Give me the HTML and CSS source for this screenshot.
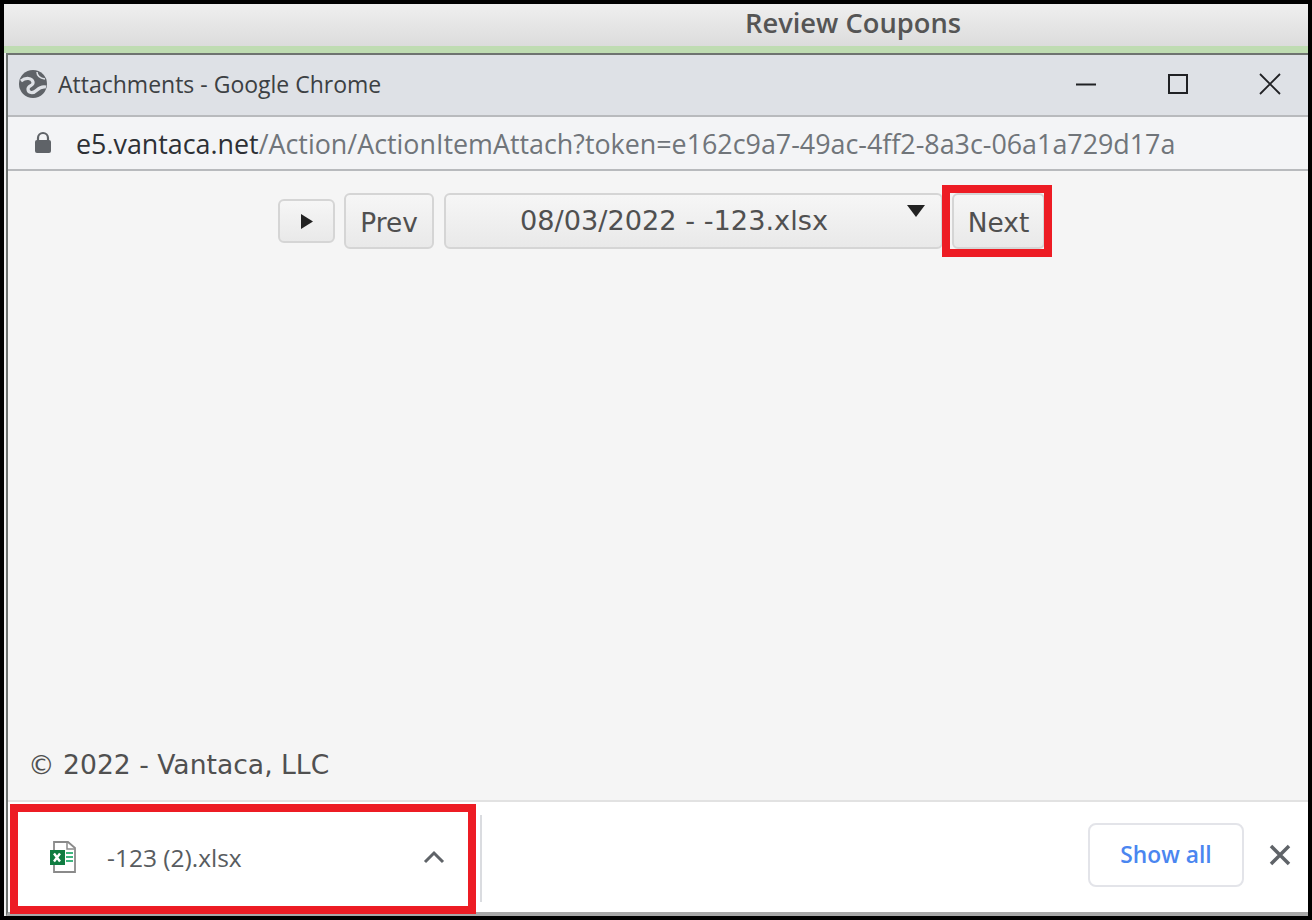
FILE: index.html
```html
<!DOCTYPE html>
<html lang="en">
<head>
    <meta charset="UTF-8">
    <title>Attachments - Google Chrome</title>
    <link rel="stylesheet" href="styles.css">
</head>
<body>
    <div class="screen">
        <div class="app-header">Review Coupons</div>
        <div class="popup">
            <div class="titlebar">
                <svg class="globe" width="30" height="30" viewBox="0 0 30 30">
                    <circle cx="15" cy="15" r="14" fill="#5f6368"/>
                    <path d="M3 12C8 8 14 9 15 13C16 17 10 16 10 20C10 24 15 25 19 21C21 19 23 17 28 18" fill="none" stroke="#dee1e6" stroke-width="3.200"/>
                    <path d="M19 3C19 7 21 9 27 10" fill="none" stroke="#dee1e6" stroke-width="1.500"/>
                </svg>
                <span class="title">Attachments - Google Chrome</span>
                <div class="winctl">
                    <svg width="24" height="24" viewBox="0 0 24 24"><path d="M2 12.500h20" stroke="#202124" stroke-width="2"/></svg>
                    <svg width="24" height="24" viewBox="0 0 24 24"><rect x="3" y="3" width="18" height="18" fill="none" stroke="#202124" stroke-width="2"/></svg>
                    <svg width="24" height="24" viewBox="0 0 24 24"><path d="M2 2l20 20M22 2L2 22" stroke="#202124" stroke-width="1.800"/></svg>
                </div>
            </div>
            <div class="urlbar">
                <svg class="lock" width="18" height="24" viewBox="0 0 18 24">
                    <path d="M4 10V7a5 5 0 0 1 10 0v3" fill="none" stroke="#5f6368" stroke-width="2.200"/>
                    <rect x="1" y="9" width="16" height="13" rx="2" fill="#5f6368"/>
                </svg>
                <span class="url"><b>e5.vantaca.net</b>/Action/ActionItemAttach?token=e162c9a7-49ac-4ff2-8a3c-06a1a729d17a</span>
            </div>
            <div class="content">
                <div class="pager">
                    <button class="btn btn-play"><svg width="13" height="15" viewBox="0 0 13 15"><path d="M1 0l12 7.500-12 7.500z" fill="#222"/></svg></button>
                    <button class="btn btn-prev">Prev</button>
                    <div class="btn select">
                        <span>08/03/2022 - -123.xlsx</span>
                        <svg class="caret" width="18" height="12" viewBox="0 0 18 12"><path d="M0 0h18l-9 12z" fill="#222"/></svg>
                    </div>
                    <button class="btn btn-next">Next</button>
                    <div class="callout callout-next"></div>
                </div>
                <div class="copyright">© 2022 - Vantaca, LLC</div>
            </div>
            <div class="downloads">
                <div class="dl-item">
                    <svg class="xl" width="28" height="32" viewBox="0 0 28 32">
                        <path d="M6 1h14l7 6v24H6z" fill="#fff" stroke="#8a8a8a" stroke-width="1.800"/>
                        <path d="M19 2v6h7" fill="none" stroke="#8a8a8a" stroke-width="1.500"/>
                        <path d="M18 12h7M18 16h7M18 20h7" stroke="#3fb57f" stroke-width="2"/>
                        <rect x="2" y="9" width="15" height="15" fill="#107c41"/>
                        <path d="M6 12.500l6 8M12 12.500l-6 8" stroke="#fff" stroke-width="2.400"/>
                    </svg>
                    <span class="dl-name">-123 (2).xlsx</span>
                    <svg class="chevron" width="22" height="14" viewBox="0 0 22 14"><path d="M2 12l9-9 9 9" fill="none" stroke="#5f6368" stroke-width="3"/></svg>
                    <div class="callout callout-dl"></div>
                </div>
                <div class="dl-sep"></div>
                <button class="show-all">Show all</button>
                <svg class="dl-close" width="22" height="22" viewBox="0 0 22 22"><path d="M2 2l18 18M20 2L2 20" stroke="#5f6368" stroke-width="3.500"/></svg>
            </div>
        </div>
    </div>
</body>
</html>
```

FILE: styles.css
```css
html, body {
    margin: 0;
    padding: 0;
    background-color: #000;
}
.screen {
    width: 1304px;
    height: 912px;
    margin: 4px 4px 0;
    background-color: #f0f0f0;
    display: flex;
    flex-direction: column;
    overflow: hidden;
}
.app-header {
    height: 42px;
    flex: none;
    background: linear-gradient(#efefef, #dcdcdc);
    border-bottom: 7px solid #bfdcb2;
    color: #555;
    font: 600 27.300px "Open Sans", sans-serif;
    line-height: 38px;
    padding-left: 741px;
}
.popup {
    flex: 1;
    min-height: 0;
    display: flex;
    flex-direction: column;
    margin-left: 2px;
    border-top: 2px solid #6e7370;
    border-left: 2px solid #6e7370;
    border-bottom: 4px solid #a8a8a8;
}
.titlebar {
    height: 62px;
    flex: none;
    box-sizing: border-box;
    background-color: #dee1e6;
    border-bottom: 2px solid #b8babd;
    display: flex;
    align-items: center;
    padding: 0 0 3px 10px;
}
.globe {
    margin-right: 10px;
}
.title {
    font: 23px "Open Sans", sans-serif;
    color: #3c4043;
}
.winctl {
    margin-left: auto;
    display: flex;
    gap: 68px;
    padding-right: 26px;
}
.urlbar {
    height: 52px;
    flex: none;
    background-color: #f3f4f6;
    border-bottom: 2px solid #b8babd;
    display: flex;
    align-items: center;
    padding-left: 26px;
}
.lock {
    margin-right: 24px;
}
.url {
    font: 26.850px "Open Sans", sans-serif;
    color: #70757a;
    white-space: nowrap;
}
.url b {
    font-weight: 400;
    color: #2d3035;
}
.content {
    flex: 1;
    min-height: 0;
    background-color: #f5f5f5;
    display: flex;
    flex-direction: column;
    justify-content: space-between;
    border-bottom: 2px solid #e2e2e2;
}
.pager {
    position: relative;
    display: flex;
    align-items: center;
    margin: 22px 0 0 270px;
    height: 56px;
}
.btn {
    box-sizing: border-box;
    height: 56px;
    background: linear-gradient(#f6f6f6, #e9e9e9);
    border: 2px solid #d5d5d5;
    border-radius: 6px;
    color: #505050;
    font: 26.400px "DejaVu Sans", sans-serif;
    padding: 0;
}
.btn-play {
    width: 57px;
    height: 44px;
    margin-right: 9px;
    display: flex;
    align-items: center;
    justify-content: center;
}
.btn-prev {
    width: 90px;
    margin-right: 10px;
    padding-top: 2px;
}
.select {
    position: relative;
    width: 499px;
    margin-right: 9px;
    display: flex;
    align-items: center;
    justify-content: center;
    padding-right: 39px;
    padding-bottom: 1px;
    font-size: 27.200px;
}
.caret {
    position: absolute;
    right: 16px;
    top: 10px;
}
.btn-next {
    width: 93px;
    padding-top: 2px;
}
.callout {
    position: absolute;
    box-sizing: border-box;
    border: 8px solid #ed1c24;
}
.callout-next {
    left: 664px;
    top: -8px;
    width: 110px;
    height: 72px;
}
.copyright {
    font: 26.600px "DejaVu Sans", sans-serif;
    color: #505050;
    margin: 0 0 20px 20px;
}
.downloads {
    height: 110px;
    flex: none;
    background-color: #fff;
    display: flex;
    align-items: center;
}
.dl-item {
    position: relative;
    width: 472px;
    height: 100%;
    display: flex;
    align-items: center;
    flex: none;
}
.xl {
    margin: 0 31px 0 40px;
}
.dl-name {
    font: 24.500px "Open Sans", sans-serif;
    color: #585c60;
}
.chevron {
    margin-left: auto;
    margin-right: 35px;
}
.callout-dl {
    left: 2px;
    top: 2px;
    width: 466px;
    height: 110px;
}
.dl-sep {
    width: 2px;
    height: 87px;
    background-color: #dadce0;
    margin-top: 2px;
}
.show-all {
    margin-left: auto;
    margin-bottom: 5px;
    box-sizing: border-box;
    width: 156px;
    height: 64px;
    background-color: #fff;
    border: 2px solid #e3e4e9;
    border-radius: 8px;
    color: #4a86f0;
    font: 600 22.800px "Open Sans", sans-serif;
    padding: 0;
}
.dl-close {
    margin: 0 17px 5px 25px;
}
```
